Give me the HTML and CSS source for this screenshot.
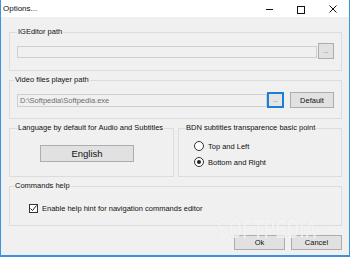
FILE: index.html
```html
<!DOCTYPE html>
<html lang="en">
<head>
    <meta charset="UTF-8">
    <title>Options...</title>
    <link rel="stylesheet" href="styles.css">
</head>
<body>

    <div class="window">

        <div class="titlebar">
            <span class="title">Options...</span>
            <div class="controls">
                <svg class="ctl" width="32" height="17" viewBox="0 0 32 17"><path d="M13 9.5H20" stroke="#111" stroke-width="1"/></svg>
                <svg class="ctl" width="32" height="17" viewBox="0 0 32 17"><rect x="12.5" y="6.5" width="7" height="7" fill="none" stroke="#111" stroke-width="1"/></svg>
                <svg class="ctl" width="32" height="17" viewBox="0 0 32 17"><path d="M12.5 5.5L19.5 12.5M19.5 5.5L12.5 12.5" stroke="#111" stroke-width="1"/></svg>
            </div>
        </div>

        <div class="content">

            <fieldset class="group g-editor">
                <legend>IGEditor path</legend>
                <div class="path-row">
                    <input class="path" type="text" disabled>
                    <button class="btn browse">...</button>
                </div>
            </fieldset>

            <fieldset class="group g-player">
                <legend>Video files player path</legend>
                <div class="path-row">
                    <input class="path path-filled" type="text" value="D:\Softpedia\Softpedia.exe" readonly>
                    <button class="btn browse focused">...</button>
                    <button class="btn default-btn">Default</button>
                </div>
            </fieldset>

            <div class="split">
                <fieldset class="group g-lang">
                    <legend>Language by default for Audio and Subtitles</legend>
                    <button class="btn lang-btn">English</button>
                </fieldset>

                <fieldset class="group g-bdn">
                    <legend>BDN subtitles transparence basic point</legend>
                    <div class="radio-list">
                        <div class="radio-item"><span class="radio"></span>Top and Left</div>
                        <div class="radio-item"><span class="radio checked"></span>Bottom and Right</div>
                    </div>
                </fieldset>
            </div>

            <fieldset class="group g-help">
                <legend>Commands help</legend>
                <div class="check-item">
                    <span class="checkbox">
                        <svg width="9" height="9" viewBox="0 0 9 9"><path d="M1.5 4.5L3.5 6.5L7.5 1.5" fill="none" stroke="#222" stroke-width="1"/></svg>
                    </span>
                    Enable help hint for navigation commands editor
                </div>
            </fieldset>

            <div class="actions">
                <button class="btn action-btn">Ok</button>
                <button class="btn action-btn">Cancel</button>
            </div>

        </div>

        <div class="watermark">SOFTPEDIA<sup>®</sup></div>
    </div>

</body>
</html>
```

FILE: styles.css
```css
body {
    margin: 0;
    padding: 0;
    font-family: 'Liberation Sans', Arial, sans-serif;
    font-size: 7.5px;
    color: #111;
    background-color: #f0f0f0;
}
.window {
    position: relative;
    width: 350px;
    height: 257px;
    box-sizing: border-box;
    border: 1px solid #3c92dc;
    border-top: none;
    border-bottom-width: 2px;
    background-color: #f0f0f0;
    overflow: hidden;
}
.titlebar {
    height: 17px;
    background-color: #fff;
    display: flex;
    align-items: center;
    justify-content: space-between;
}
.title {
    padding-left: 2px;
    font-size: 8px;
    color: #111;
}
.controls {
    display: flex;
    height: 17px;
}
.ctl {
    display: block;
}
.content {
    padding: 10px 7px 0 8px;
}
.group {
    margin: 0;
    min-width: 0;
    border: 1px solid #dcdcdc;
    padding: 6px 7px 11px;
}
.group legend {
    padding: 0 1px;
    line-height: 10px;
    font-size: 7.5px;
}
.g-player {
    margin-top: 4px;
    padding: 7px 7px 10px;
}
.g-player legend {
    margin-left: -3px;
}
.path-row {
    display: flex;
    align-items: flex-start;
}
.path {
    flex: 1;
    min-width: 0;
    height: 12px;
    margin: 3px 0 0;
    box-sizing: border-box;
    border: 1px solid #cfcfcf;
    background-color: #f0f0f0;
    padding: 0 2px;
    font-family: inherit;
    font-size: 7.5px;
    color: #6d6d6d;
    outline: none;
}
.path-filled {
    margin-top: 2px;
    height: 13px;
}
.btn {
    box-sizing: border-box;
    height: 16px;
    padding: 0;
    border: 1px solid #adadad;
    background-color: #e1e1e1;
    font-family: inherit;
    font-size: 7.5px;
    color: #111;
}
.browse {
    width: 16px;
    margin-left: 1px;
    font-size: 6px;
    color: #444;
}
.browse.focused {
    width: 17px;
    margin-left: 0;
    border: 2px solid #1a7fd8;
    background-color: #e5e5e5;
}
.default-btn {
    width: 44px;
    margin-left: 6px;
}
.split {
    display: grid;
    grid-template-columns: 165px 1fr;
    gap: 4px;
    margin-top: 4px;
}
.g-lang {
    padding: 12px 7px 14px;
}
.lang-btn {
    display: block;
    width: 94px;
    height: 17px;
    margin-left: 23px;
    font-size: 9.5px;
}
.g-bdn {
    padding: 7px 7px 8px;
}
.g-bdn legend {
    padding: 0;
}
.radio-list {
    display: flex;
    flex-direction: column;
    gap: 4px;
    padding-left: 8px;
}
.radio-item {
    display: flex;
    align-items: center;
    gap: 4px;
    height: 12px;
}
.radio {
    position: relative;
    width: 10px;
    height: 10px;
    box-sizing: border-box;
    border: 1px solid #333;
    border-radius: 50%;
    background-color: #fff;
}
.radio.checked::after {
    content: "";
    position: absolute;
    left: 2px;
    top: 2px;
    width: 4px;
    height: 4px;
    border-radius: 50%;
    background-color: #222;
}
.g-help {
    margin-top: 4px;
    padding: 12px 7px 12px;
}
.g-help legend {
    margin-left: -3px;
}
.check-item {
    display: flex;
    align-items: center;
    gap: 4px;
    height: 10px;
    padding-left: 12px;
}
.checkbox {
    width: 9px;
    height: 9px;
    box-sizing: border-box;
    border: 1px solid #333;
    background-color: #fff;
    display: flex;
}
.checkbox svg {
    display: block;
    margin: -1px;
}
.actions {
    display: flex;
    justify-content: flex-end;
    gap: 6px;
    margin-top: 9px;
}
.action-btn {
    width: 51px;
    height: 15px;
}
.watermark {
    position: absolute;
    left: 216px;
    top: 221px;
    font-size: 25px;
    line-height: 12px;
    font-weight: bold;
    letter-spacing: 1px;
    color: rgba(255, 255, 255, 0.7);
    text-shadow: 0 0 1px rgba(0, 0, 0, 0.1);
    transform: scaleX(0.66);
    transform-origin: left top;
    pointer-events: none;
}
.watermark sup {
    font-size: 8px;
    font-weight: normal;
}
```
